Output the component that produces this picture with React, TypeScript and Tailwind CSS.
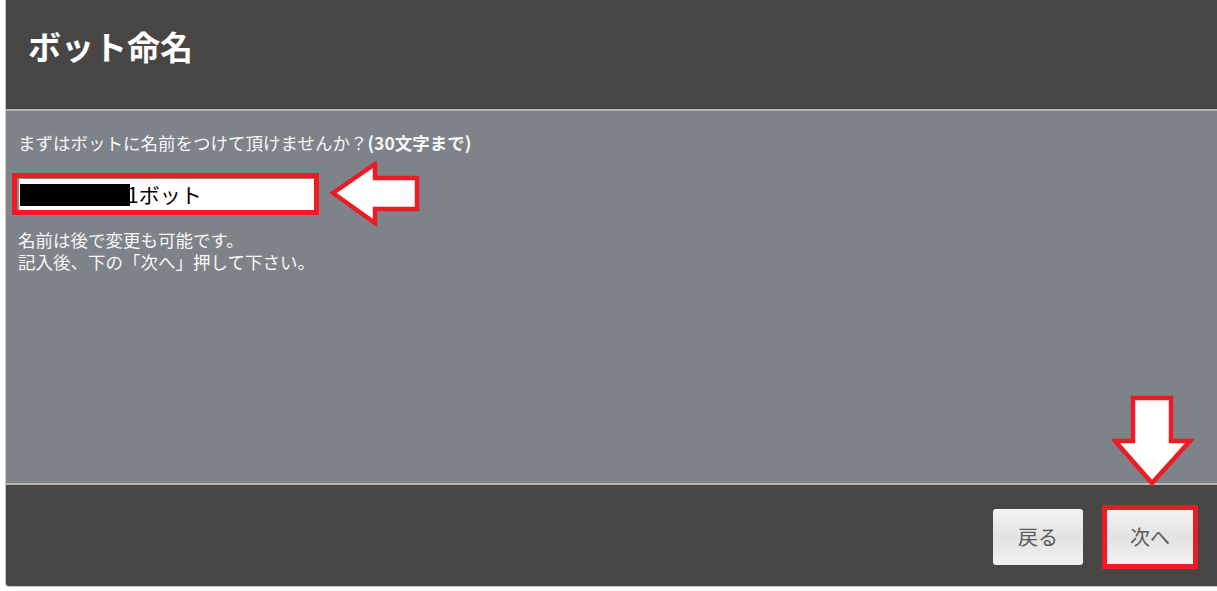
const font = { fontFamily: '"Noto Sans CJK JP", "Noto Sans", sans-serif' }

function LeftArrow() {
  return (
    <svg width="92" height="66" viewBox="0 0 92 66" className="ml-[11px] shrink-0">
      <polygon
        points="3,32 45,3 45,17 87,17 87,48 45,48 45,62"
        fill="#ffffff"
        stroke="#ed1c24"
        strokeWidth="4.5"
        strokeLinejoin="miter"
      />
    </svg>
  )
}

function DownArrow() {
  return (
    <svg width="82" height="92" viewBox="0 0 82 92" className="absolute right-[23px] top-[284px]">
      <polygon
        points="21,3 59,3 59,46 78,46 40,88 3,46 21,46"
        fill="#ffffff"
        stroke="#ed1c24"
        strokeWidth="4.5"
        strokeLinejoin="miter"
      />
    </svg>
  )
}

function GrayButton({ label, className = "" }: { label: string; className?: string }) {
  return (
    <button
      className={
        "flex items-center justify-center rounded-[3px] bg-[linear-gradient(#f3f3f3,#e3e3e3_50%,#f1f1f1)] text-[20px] text-[#5a5a5a] " +
        className
      }
    >
      {label}
    </button>
  )
}

export default function App() {
  return (
    <div className="h-[591px] w-full bg-white pl-[5px]" style={font}>
      <div className="flex h-[587px] flex-col overflow-hidden rounded-bl-[4px] border-b border-l border-[#c9c9c9]">
        <header className="flex h-[109px] shrink-0 items-center bg-[#484644] pb-[17px] pl-[22px]">
          <h1 className="text-[33px] font-bold leading-none text-white">ボット命名</h1>
        </header>

        <section className="relative h-[376px] shrink-0 border-y-2 border-[#b4b4b4] bg-[#7e8289] px-[12px] pt-[20px] text-[17.5px] text-[#f7f7f7]">
          <p className="leading-[24px]">
            まずはボットに名前をつけて頂けませんか？<span className="font-bold">(30文字まで)</span>
          </p>

          <div className="mt-[6px] flex items-center">
            <div className="-ml-[6px] h-[42px] w-[307px] border-[5px] border-[#ed1c24]">
              <div className="flex h-full items-center border-l-2 border-t border-[#8a8a8a] bg-white pl-[1px]">
                <span className="h-[22px] w-[110px] bg-black" />
                <span className="-ml-[3px] text-[21px] leading-none text-black">1ボット</span>
              </div>
            </div>
            <LeftArrow />
          </div>

          <div className="mt-[2px] leading-[22px]">
            <p>名前は後で変更も可能です。</p>
            <p>記入後、下の「次へ」押して下さい。</p>
          </div>

          <DownArrow />
        </section>

        <footer className="flex flex-1 items-center justify-end gap-[19px] bg-[#484644] pr-[19px] pt-[2px]">
          <GrayButton label="戻る" className="h-[56px] w-[90px]" />
          <div className="h-[64px] w-[96px] border-[5px] border-[#ed1c24]">
            <GrayButton label="次へ" className="h-full w-full rounded-none" />
          </div>
        </footer>
      </div>
    </div>
  )
}
